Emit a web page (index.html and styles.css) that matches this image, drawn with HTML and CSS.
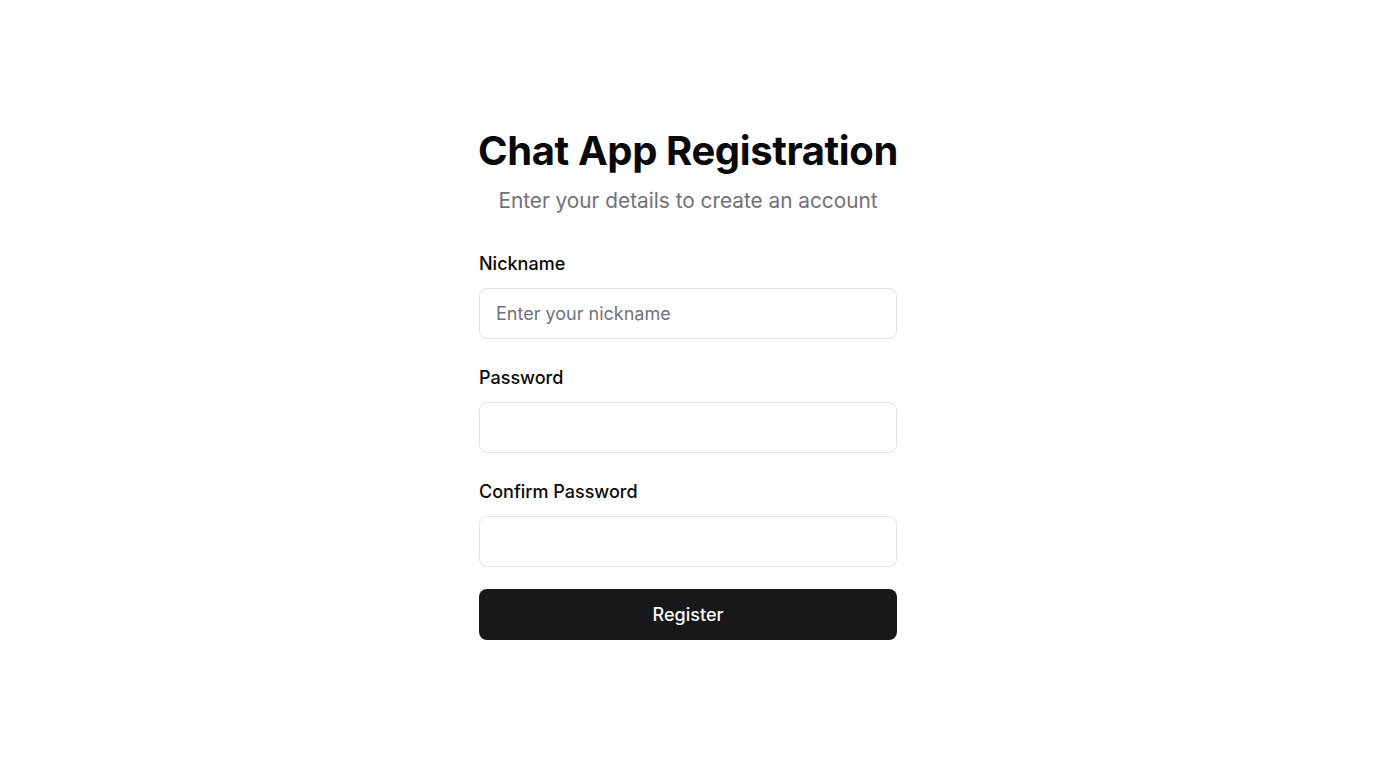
FILE: index.html
```html
<!DOCTYPE html>
<html lang="en">
<head>
<meta charset="utf-8">
<title>Chat App Registration</title>
<link rel="stylesheet" href="styles.css">
</head>
<body>
<main class="page">
  <form class="card">
    <header class="head">
      <h1 class="title">Chat App Registration</h1>
      <p class="subtitle">Enter your details to create an account</p>
    </header>
    <div class="fields">
      <div class="field">
        <label class="label" for="nick">Nickname</label>
        <input class="input" id="nick" type="text" placeholder="Enter your nickname">
      </div>
      <div class="field">
        <label class="label" for="pw">Password</label>
        <input class="input" id="pw" type="password">
      </div>
      <div class="field">
        <label class="label" for="pw2">Confirm Password</label>
        <input class="input" id="pw2" type="password">
      </div>
      <button class="btn" type="button">Register</button>
    </div>
  </form>
</main>
</body>
</html>
```
FILE: styles.css
```css
* { box-sizing: border-box; }
html, body { margin: 0; padding: 0; background: #fff; }
body {
  font-family: Inter, "Noto Sans", sans-serif;
  color: #09090b;
}
.page {
  min-height: 768px;
  padding-bottom: 2px;
  display: flex;
  align-items: center;
  justify-content: center;
}
.card {
  width: 418px;
  display: flex;
  flex-direction: column;
}
.head {
  text-align: center;
  display: flex;
  flex-direction: column;
  gap: 11px;
  margin-bottom: 34px;
}
.title {
  margin: 0 -4px;
  font-size: 40px;
  line-height: 48px;
  font-weight: 700;
  letter-spacing: -0.4px;
  white-space: nowrap;
}
.subtitle {
  margin: 0;
  font-size: 20.8px;
  line-height: 30px;
  color: #71717a;
}
.fields {
  display: flex;
  flex-direction: column;
  gap: 25px;
}
.field {
  display: flex;
  flex-direction: column;
  gap: 11px;
}
.label {
  font-size: 18px;
  line-height: 27px;
  font-weight: 500;
}
.input {
  height: 51px;
  border: 1px solid #e4e4e7;
  border-radius: 8px;
  padding: 0 16px;
  font-family: inherit;
  font-size: 18px;
  color: #09090b;
  background: #fff;
  outline: none;
}
.input::placeholder { color: #71717a; }
.btn {
  margin-top: -3px;
  height: 51px;
  border: 0;
  border-radius: 8px;
  background: #18181b;
  color: #fafafa;
  font-family: inherit;
  font-size: 18px;
  font-weight: 500;
  cursor: pointer;
}
```
